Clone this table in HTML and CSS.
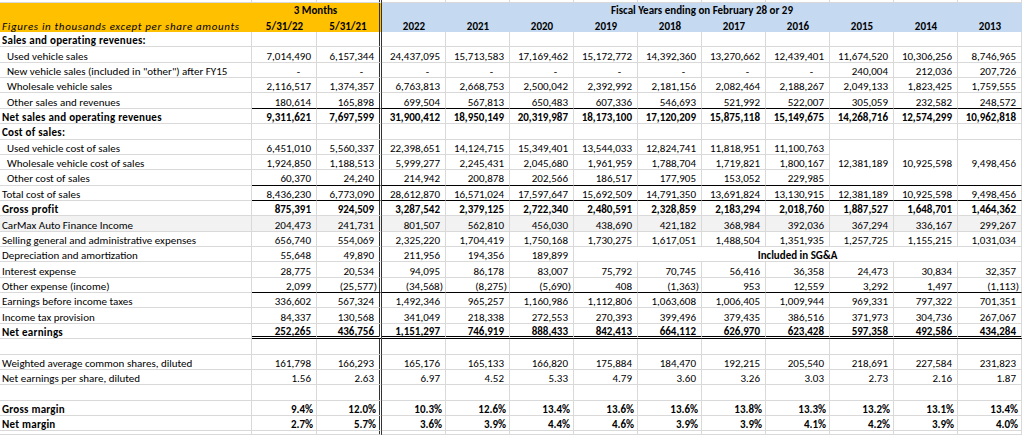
FILE: index.html
```html
<!DOCTYPE html>
<html>
<head>
<meta charset="utf-8">
<link rel="stylesheet" href="styles.css">
</head>
<body>
<div class="sheet">
  <!-- top sliver -->
  <div class="c s"></div><div class="c s"></div><div class="c s q"></div><div class="c s"></div><div class="c s"></div><div class="c s"></div><div class="c s"></div><div class="c s"></div><div class="c s"></div><div class="c s"></div><div class="c s"></div><div class="c s"></div><div class="c s"></div>

  <!-- header row 1 -->
  <div class="h hy"></div>
  <div class="h hy b ctr span2 q">3 Months</div>
  <div class="h hb b ctr span10">Fiscal Years ending on February 28 or 29</div>

  <!-- header row 2 -->
  <div class="h h2 hy l it">Figures in thousands except per share amounts</div>
  <div class="h h2 hy b ctr">5/31/22</div>
  <div class="h h2 hy b ctr q">5/31/21</div>
  <div class="h h2 hb b ctr">2022</div>
  <div class="h h2 hb b ctr">2021</div>
  <div class="h h2 hb b ctr">2020</div>
  <div class="h h2 hb b ctr">2019</div>
  <div class="h h2 hb b ctr">2018</div>
  <div class="h h2 hb b ctr">2017</div>
  <div class="h h2 hb b ctr">2016</div>
  <div class="h h2 hb b ctr">2015</div>
  <div class="h h2 hb b ctr">2014</div>
  <div class="h h2 hb b ctr">2013</div>

  <!-- Sales and operating revenues -->
  <div class="c l b">Sales and operating revenues:</div>
  <div class="c"></div><div class="c q"></div><div class="c"></div><div class="c"></div><div class="c"></div><div class="c"></div><div class="c"></div><div class="c"></div><div class="c"></div><div class="c"></div><div class="c"></div><div class="c"></div>

  <div class="c l i">Used vehicle sales</div>
  <div class="c n">7,014,490</div><div class="c n q">6,157,344</div><div class="c n">24,437,095</div><div class="c n">15,713,583</div><div class="c n">17,169,462</div><div class="c n">15,172,772</div><div class="c n">14,392,360</div><div class="c n">13,270,662</div><div class="c n">12,439,401</div><div class="c n">11,674,520</div><div class="c n">10,306,256</div><div class="c n">8,746,965</div>

  <div class="c l i">New vehicle sales (included in "other") after FY15</div>
  <div class="c n d">-</div><div class="c n d q">-</div><div class="c n d">-</div><div class="c n d">-</div><div class="c n d">-</div><div class="c n d">-</div><div class="c n d">-</div><div class="c n d">-</div><div class="c n d">-</div><div class="c n">240,004</div><div class="c n">212,036</div><div class="c n">207,726</div>

  <div class="c l i">Wholesale vehicle sales</div>
  <div class="c n">2,116,517</div><div class="c n q">1,374,357</div><div class="c n">6,763,813</div><div class="c n">2,668,753</div><div class="c n">2,500,042</div><div class="c n">2,392,992</div><div class="c n">2,181,156</div><div class="c n">2,082,464</div><div class="c n">2,188,267</div><div class="c n">2,049,133</div><div class="c n">1,823,425</div><div class="c n">1,759,555</div>

  <div class="c l i">Other sales and revenues</div>
  <div class="c n u">180,614</div><div class="c n u q">165,898</div><div class="c n u">699,504</div><div class="c n u">567,813</div><div class="c n u">650,483</div><div class="c n u">607,336</div><div class="c n u">546,693</div><div class="c n u">521,992</div><div class="c n u">522,007</div><div class="c n u">305,059</div><div class="c n u">232,582</div><div class="c n u">248,572</div>

  <div class="c l b">Net sales and operating revenues</div>
  <div class="c n b">9,311,621</div><div class="c n b q">7,697,599</div><div class="c n b">31,900,412</div><div class="c n b">18,950,149</div><div class="c n b">20,319,987</div><div class="c n b">18,173,100</div><div class="c n b">17,120,209</div><div class="c n b">15,875,118</div><div class="c n b">15,149,675</div><div class="c n b">14,268,716</div><div class="c n b">12,574,299</div><div class="c n b">10,962,818</div>

  <div class="c l b">Cost of sales:</div>
  <div class="c"></div><div class="c q"></div><div class="c"></div><div class="c"></div><div class="c"></div><div class="c"></div><div class="c"></div><div class="c"></div><div class="c"></div><div class="c"></div><div class="c"></div><div class="c"></div>

  <div class="c l i">Used vehicle cost of sales</div>
  <div class="c n">6,451,010</div><div class="c n q">5,560,337</div><div class="c n">22,398,651</div><div class="c n">14,124,715</div><div class="c n">15,349,401</div><div class="c n">13,544,033</div><div class="c n">12,824,741</div><div class="c n">11,818,951</div><div class="c n">11,100,763</div>
  <div class="c n u rows3">12,381,189</div><div class="c n u rows3">10,925,598</div><div class="c n u rows3">9,498,456</div>

  <div class="c l i">Wholesale vehicle cost of sales</div>
  <div class="c n">1,924,850</div><div class="c n q">1,188,513</div><div class="c n">5,999,277</div><div class="c n">2,245,431</div><div class="c n">2,045,680</div><div class="c n">1,961,959</div><div class="c n">1,788,704</div><div class="c n">1,719,821</div><div class="c n">1,800,167</div>

  <div class="c l i">Other cost of sales</div>
  <div class="c n u">60,370</div><div class="c n u q">24,240</div><div class="c n u">214,942</div><div class="c n u">200,878</div><div class="c n u">202,566</div><div class="c n u">186,517</div><div class="c n u">177,905</div><div class="c n u">153,052</div><div class="c n u">229,985</div>

  <div class="c l">Total cost of sales</div>
  <div class="c n u">8,436,230</div><div class="c n u q">6,773,090</div><div class="c n u">28,612,870</div><div class="c n u">16,571,024</div><div class="c n u">17,597,647</div><div class="c n u">15,692,509</div><div class="c n u">14,791,350</div><div class="c n u">13,691,824</div><div class="c n u">13,130,915</div><div class="c n u">12,381,189</div><div class="c n u">10,925,598</div><div class="c n u">9,498,456</div>

  <div class="c l b">Gross profit</div>
  <div class="c n b">875,391</div><div class="c n b q">924,509</div><div class="c n b">3,287,542</div><div class="c n b">2,379,125</div><div class="c n b">2,722,340</div><div class="c n b">2,480,591</div><div class="c n b">2,328,859</div><div class="c n b">2,183,294</div><div class="c n b">2,018,760</div><div class="c n b">1,887,527</div><div class="c n b">1,648,701</div><div class="c n b">1,464,362</div>

  <div class="c l g">CarMax Auto Finance Income</div>
  <div class="c n g">204,473</div><div class="c n g q">241,731</div><div class="c n g">801,507</div><div class="c n g">562,810</div><div class="c n g">456,030</div><div class="c n g">438,690</div><div class="c n g">421,182</div><div class="c n g">368,984</div><div class="c n g">392,036</div><div class="c n g">367,294</div><div class="c n g">336,167</div><div class="c n g">299,267</div>

  <div class="c l">Selling general and administrative expenses</div>
  <div class="c n">656,740</div><div class="c n q">554,069</div><div class="c n">2,325,220</div><div class="c n">1,704,419</div><div class="c n">1,750,168</div><div class="c n">1,730,275</div><div class="c n">1,617,051</div><div class="c n">1,488,504</div><div class="c n">1,351,935</div><div class="c n">1,257,725</div><div class="c n">1,155,215</div><div class="c n">1,031,034</div>

  <div class="c l">Depreciation and amortization</div>
  <div class="c n">55,648</div><div class="c n q">49,890</div><div class="c n">211,956</div><div class="c n">194,356</div><div class="c n">189,899</div>
  <div class="c b ctr span7">Included in SG&amp;A</div>

  <div class="c l">Interest expense</div>
  <div class="c n">28,775</div><div class="c n q">20,534</div><div class="c n">94,095</div><div class="c n">86,178</div><div class="c n">83,007</div><div class="c n">75,792</div><div class="c n">70,745</div><div class="c n">56,416</div><div class="c n">36,358</div><div class="c n">24,473</div><div class="c n">30,834</div><div class="c n">32,357</div>

  <div class="c l">Other expense (income)</div>
  <div class="c n u">2,099</div><div class="c n u q neg">(25,577)</div><div class="c n u neg">(34,568)</div><div class="c n u neg">(8,275)</div><div class="c n u neg">(5,690)</div><div class="c n u">408</div><div class="c n u neg">(1,363)</div><div class="c n u">953</div><div class="c n u">12,559</div><div class="c n u">3,292</div><div class="c n u">1,497</div><div class="c n u neg">(1,113)</div>

  <div class="c l">Earnings before income taxes</div>
  <div class="c n">336,602</div><div class="c n q">567,324</div><div class="c n">1,492,346</div><div class="c n">965,257</div><div class="c n">1,160,986</div><div class="c n">1,112,806</div><div class="c n">1,063,608</div><div class="c n">1,006,405</div><div class="c n">1,009,944</div><div class="c n">969,331</div><div class="c n">797,322</div><div class="c n">701,351</div>

  <div class="c l">Income tax provision</div>
  <div class="c n">84,337</div><div class="c n q">130,568</div><div class="c n">341,049</div><div class="c n">218,338</div><div class="c n">272,553</div><div class="c n">270,393</div><div class="c n">399,496</div><div class="c n">379,435</div><div class="c n">386,516</div><div class="c n">371,973</div><div class="c n">304,736</div><div class="c n">267,067</div>

  <div class="c l b">Net earnings</div>
  <div class="c n b w">252,265</div><div class="c n b w q">436,756</div><div class="c n b w">1,151,297</div><div class="c n b w">746,919</div><div class="c n b w">888,433</div><div class="c n b w">842,413</div><div class="c n b w">664,112</div><div class="c n b w">626,970</div><div class="c n b w">623,428</div><div class="c n b w">597,358</div><div class="c n b w">492,586</div><div class="c n b w">434,284</div>

  <div class="c l"></div>
  <div class="c"></div><div class="c q"></div><div class="c"></div><div class="c"></div><div class="c"></div><div class="c"></div><div class="c"></div><div class="c"></div><div class="c"></div><div class="c"></div><div class="c"></div><div class="c"></div>

  <div class="c l">Weighted average common shares, diluted</div>
  <div class="c n">161,798</div><div class="c n q">166,293</div><div class="c n">165,176</div><div class="c n">165,133</div><div class="c n">166,820</div><div class="c n">175,884</div><div class="c n">184,470</div><div class="c n">192,215</div><div class="c n">205,540</div><div class="c n">218,691</div><div class="c n">227,584</div><div class="c n">231,823</div>

  <div class="c l">Net earnings per share, diluted</div>
  <div class="c n">1.56</div><div class="c n q">2.63</div><div class="c n">6.97</div><div class="c n">4.52</div><div class="c n">5.33</div><div class="c n">4.79</div><div class="c n">3.60</div><div class="c n">3.26</div><div class="c n">3.03</div><div class="c n">2.73</div><div class="c n">2.16</div><div class="c n">1.87</div>

  <div class="c l"></div>
  <div class="c"></div><div class="c q"></div><div class="c"></div><div class="c"></div><div class="c"></div><div class="c"></div><div class="c"></div><div class="c"></div><div class="c"></div><div class="c"></div><div class="c"></div><div class="c"></div>

  <div class="c l b">Gross margin</div>
  <div class="c n p b">9.4%</div><div class="c n p b q">12.0%</div><div class="c n p b">10.3%</div><div class="c n p b">12.6%</div><div class="c n p b">13.4%</div><div class="c n p b">13.6%</div><div class="c n p b">13.6%</div><div class="c n p b">13.8%</div><div class="c n p b">13.3%</div><div class="c n p b">13.2%</div><div class="c n p b">13.1%</div><div class="c n p b">13.4%</div>

  <div class="c l b">Net margin</div>
  <div class="c n p b">2.7%</div><div class="c n p b q">5.7%</div><div class="c n p b">3.6%</div><div class="c n p b">3.9%</div><div class="c n p b">4.4%</div><div class="c n p b">4.6%</div><div class="c n p b">3.9%</div><div class="c n p b">3.9%</div><div class="c n p b">4.1%</div><div class="c n p b">4.2%</div><div class="c n p b">3.9%</div><div class="c n p b">4.0%</div>

  <!-- bottom sliver -->
  <div class="c s"></div><div class="c s"></div><div class="c s q"></div><div class="c s"></div><div class="c s"></div><div class="c s"></div><div class="c s"></div><div class="c s"></div><div class="c s"></div><div class="c s"></div><div class="c s"></div><div class="c s"></div><div class="c s"></div>
</div>
</body>
</html>
```

FILE: styles.css
```css
html, body {
  margin: 0;
  padding: 0;
  background: #ffffff;
}

body {
  font-family: "Carlito", "Lato", "Liberation Sans", sans-serif;
  font-size: 11px;
  color: #000000;
  overflow: hidden;
  width: 1024px;
  height: 435px;
}

.sheet {
  display: grid;
  grid-template-columns: 252px 65px 65px repeat(10, 64px);
  grid-template-rows: 3px 14px 15px repeat(26, 15.36px) 4px;
  width: 1022px;
}

.c, .h {
  box-sizing: border-box;
  display: flex;
  align-items: center;
  white-space: nowrap;
  overflow: hidden;
  min-width: 0;
}

.c {
  padding-top: 3px;
  border-right: 1px solid #d9d9d9;
  border-bottom: 1px solid #d9d9d9;
}

.c.s { padding-top: 0; }

.h {
  border: 0;
  padding-top: 1px;
}

.h.h2 { padding-top: 3px; }

.hy { background: #ffc000; }
.hb { background: #c5d9f1; }

.l {
  padding-left: 2px;
  justify-content: flex-start;
}

.i { padding-left: 7px; }
.it {
  font-style: italic;
  letter-spacing: 0.65px;
}
.b { font-weight: 700; }
.l.b { letter-spacing: 0.25px; }

.ctr { justify-content: center; }

.n {
  justify-content: flex-end;
  padding-right: 5px;
}

.n.d { padding-right: 16px; }
.n.neg { padding-right: 2px; }
.n.p { padding-right: 3px; }

.g { background: #f2f2f2; }

.q { border-right: 3px double #333333; }

.c.u { border-bottom: 1px solid #000000; }
.c.w { border-bottom: 3px double #000000; }

.span2 { grid-column: span 2; }
.span7 { grid-column: span 7; }
.span10 { grid-column: span 10; }
.rows3 { grid-row: span 3; }
```
